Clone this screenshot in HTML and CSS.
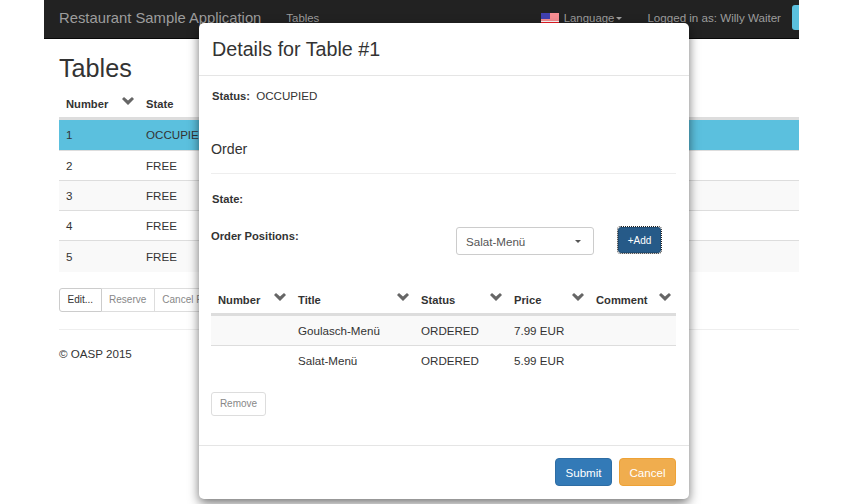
FILE: index.html
```html
<!DOCTYPE html>
<html lang="en">
<head>
    <meta charset="UTF-8">
    <title>Restaurant Sample Application</title>
    <link rel="stylesheet" href="styles.css">
</head>
<body>
    <svg class="defs" width="0" height="0">
        <symbol id="chevron" viewBox="0 0 12 8">
            <path d="M0 2 L2 0 L6 3.6 L10 0 L12 2 L6 8 Z"/>
        </symbol>
    </svg>
    <div class="page">
        <nav class="navbar">
            <span class="brand">Restaurant Sample Application</span>
            <span class="nav-link">Tables</span>
            <div class="nav-right">
                <svg class="flag" viewBox="0 0 18 10" width="18" height="10">
                    <rect width="18" height="10" fill="#fff"/>
                    <path d="M0 1h18M0 3h18M0 5h18M0 7h18" stroke="#f01c24" stroke-width="1"/>
                    <rect y="9" width="18" height="1" fill="#f01c24"/>
                    <rect width="9" height="6" fill="#4141b0"/>
                </svg>
                <span class="nav-link lang">Language<i class="caret"></i></span>
                <span class="nav-link user">Logged in as: Willy Waiter</span>
                <span class="logout"></span>
            </div>
        </nav>
        <main class="content">
            <h1>Tables</h1>
            <table class="grid tables-grid">
                <thead>
                    <tr>
                        <th>Number<svg class="chev"><use href="#chevron"/></svg></th>
                        <th>State</th>
                    </tr>
                </thead>
                <tbody>
                    <tr class="selected"><td>1</td><td>OCCUPIED</td></tr>
                    <tr><td>2</td><td>FREE</td></tr>
                    <tr><td>3</td><td>FREE</td></tr>
                    <tr><td>4</td><td>FREE</td></tr>
                    <tr class="last"><td>5</td><td>FREE</td></tr>
                </tbody>
            </table>
            <div class="btn-group">
                <button class="btn">Edit...</button>
                <button class="btn off">Reserve</button>
                <button class="btn off">Cancel Reservation</button>
            </div>
            <footer class="foot">© OASP 2015</footer>
        </main>
    </div>

    <div class="modal">
        <div class="modal-header">Details for Table #1</div>
        <div class="modal-body">
            <p class="status"><b>Status:</b> OCCUPIED</p>
            <h2>Order</h2>
            <p class="state"><b>State:</b></p>
            <div class="positions">
                <b>Order Positions:</b>
                <div class="select">Salat-Menü<i class="caret"></i></div>
                <button class="add">+Add</button>
            </div>
            <table class="grid order-grid">
                <thead>
                    <tr>
                        <th>Number<svg class="chev"><use href="#chevron"/></svg></th>
                        <th>Title<svg class="chev"><use href="#chevron"/></svg></th>
                        <th>Status<svg class="chev"><use href="#chevron"/></svg></th>
                        <th>Price<svg class="chev"><use href="#chevron"/></svg></th>
                        <th>Comment<svg class="chev"><use href="#chevron"/></svg></th>
                    </tr>
                </thead>
                <tbody>
                    <tr><td></td><td>Goulasch-Menü</td><td>ORDERED</td><td>7.99 EUR</td><td></td></tr>
                    <tr><td></td><td>Salat-Menü</td><td>ORDERED</td><td>5.99 EUR</td><td></td></tr>
                </tbody>
            </table>
            <button class="btn off remove">Remove</button>
        </div>
        <div class="modal-footer">
            <button class="action submit">Submit</button>
            <button class="action cancel">Cancel</button>
        </div>
    </div>
</body>
</html>
```

FILE: styles.css
```css
html, body {
    margin: 0;
    height: 100%;
    overflow: hidden;
    background-color: #fff;
}

body {
    font-family: "Liberation Sans", Arial, sans-serif;
    font-size: 11.6px;
    color: #333;
}

.defs {
    position: absolute;
}

.page {
    width: 755px;
    margin-left: 44px;
    overflow: hidden;
}

.navbar {
    display: flex;
    align-items: center;
    box-sizing: border-box;
    height: 39px;
    padding: 0 0 3px 15px;
    background-color: #222;
    border-bottom: 1px solid #080808;
    color: #9d9d9d;
    white-space: nowrap;
}

.brand {
    font-size: 14.8px;
    margin-right: 25px;
}

.nav-link {
    font-size: 11.4px;
}

.nav-right {
    display: flex;
    align-items: center;
    margin-left: auto;
}

.flag {
    margin-right: 5px;
}

.caret {
    display: inline-block;
    margin-left: 2px;
    vertical-align: middle;
    border-top: 3px solid;
    border-left: 3px solid transparent;
    border-right: 3px solid transparent;
}

.user {
    margin-left: 25px;
    font-size: 11.6px;
}

.logout {
    width: 7px;
    height: 25px;
    margin-left: 11px;
    background-color: #5bc0de;
    border-radius: 3px 0 0 3px;
}

.content {
    padding: 0 0 0 15px;
}

h1 {
    font-size: 25.2px;
    font-weight: 400;
    line-height: 28px;
    margin: 15px 0 0;
}

.grid {
    width: 100%;
    border-collapse: collapse;
    table-layout: fixed;
}

.grid th {
    position: relative;
    text-align: left;
    vertical-align: bottom;
    box-sizing: border-box;
    padding: 0 7px 7px;
    border-bottom: 3px solid #ddd;
    font-size: 11.2px;
    white-space: nowrap;
    color: #333;
}

.grid td {
    height: 29px;
    padding: 0 7px;
    border-top: 1px solid #ddd;
}

.grid tbody tr:nth-child(odd) {
    background-color: #f9f9f9;
}

.grid tbody tr.selected {
    background-color: #5bc0de;
}

.grid tr.selected td {
    height: 30px;
}

.grid tr.last td {
    height: 31px;
}

.chev {
    position: absolute;
    bottom: 12px;
    right: 5px;
    width: 12px;
    height: 8px;
    fill: #666;
}

.tables-grid {
    margin-top: 2px;
}

.tables-grid th {
    height: 34px;
}

.tables-grid th:first-child {
    width: 80px;
}

.btn-group {
    display: flex;
    margin-top: 16px;
}

.btn {
    height: 24px;
    padding: 0 7.5px;
    font: 10px "Liberation Sans", Arial, sans-serif;
    color: #333;
    background-color: #fff;
    border: 1px solid #ccc;
}

.btn-group .btn + .btn {
    border-left: none;
}

.btn-group .btn:first-child {
    border-radius: 3px 0 0 3px;
}

.btn.off {
    color: #888;
    border-color: #ddd;
}

.foot {
    margin-top: 17px;
    padding-top: 16px;
    border-top: 1px solid #eee;
    line-height: 16px;
}

.modal {
    position: absolute;
    left: 199px;
    top: 23px;
    width: 490px;
    height: 476px;
    display: flex;
    flex-direction: column;
    box-sizing: border-box;
    background-color: #fff;
    border-radius: 5px;
    box-shadow: 0 4px 11px rgba(0, 0, 0, 0.55);
}

.modal-header {
    height: 52px;
    line-height: 52px;
    padding-left: 13px;
    font-size: 19.7px;
    border-bottom: 1px solid #e5e5e5;
    color: #333;
}

.modal-body {
    flex: 1;
    padding: 0 13px 0 12px;
}

.status {
    margin: 13px 0 0 1px;
    line-height: 14px;
}

.status b {
    font-size: 11.2px;
    margin-right: 3px;
}

h2 {
    font-size: 14.2px;
    font-weight: 400;
    margin: 38px 0 0;
    padding-bottom: 16px;
    line-height: 16px;
    border-bottom: 1px solid #eee;
}

.state {
    margin: 18px 0 0 1px;
    line-height: 14px;
    font-size: 11.2px;
}

.positions {
    display: flex;
    align-items: flex-start;
    margin-top: 21px;
}

.positions b {
    width: 245px;
    font-size: 11.2px;
    line-height: 18px;
}

.select {
    display: flex;
    align-items: center;
    justify-content: space-between;
    box-sizing: border-box;
    width: 138px;
    height: 28px;
    padding: 0 12px 0 9px;
    border: 1px solid #ccc;
    border-radius: 3px;
    color: #555;
}

.add {
    width: 43px;
    height: 26px;
    margin-left: 24px;
    padding: 0;
    font: 10px "Liberation Sans", Arial, sans-serif;
    color: #fff;
    background-color: #265a88;
    border: 1px solid #204d74;
    border-radius: 3px;
    outline: 1px dotted #222;
}

.order-grid {
    margin-top: 26px;
}

.order-grid th {
    height: 33px;
}

.order-grid th:nth-child(1) { width: 80px; }
.order-grid th:nth-child(2) { width: 123px; }
.order-grid th:nth-child(3) { width: 93px; }
.order-grid th:nth-child(4) { width: 82px; }

.remove {
    display: block;
    width: 55px;
    height: 24px;
    margin-top: 17px;
    padding: 0;
    border-radius: 3px;
}

.modal-footer {
    display: flex;
    justify-content: flex-end;
    gap: 7px;
    height: 41px;
    padding: 12px 13px 0;
    border-top: 1px solid #e5e5e5;
}

.action {
    width: 57px;
    height: 28px;
    padding: 0;
    font: 11.6px "Liberation Sans", Arial, sans-serif;
    color: #fff;
    border: 1px solid;
    border-radius: 4px;
}

.submit {
    background-color: #337ab7;
    border-color: #2e6da4;
}

.cancel {
    background-color: #f0ad4e;
    border-color: #eea236;
}
```
